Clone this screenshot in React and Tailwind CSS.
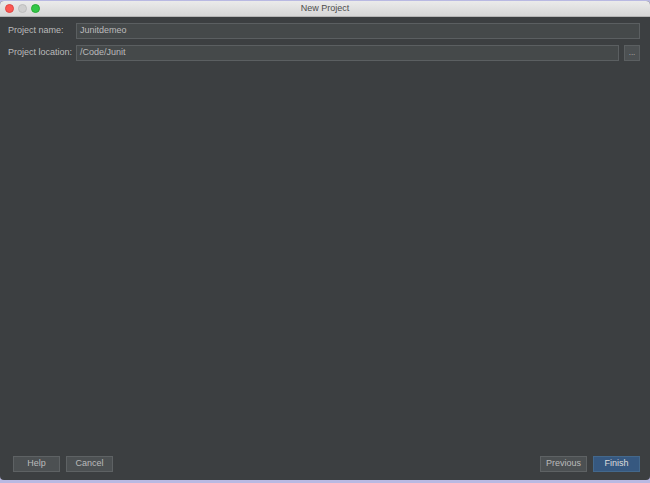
import React from "react";

const Field = ({ label, value, withButton }) => (
  <div className="flex items-center h-[16px]">
    <div className="w-[68px] text-[9px] text-[#bbbbbb]">{label}</div>
    <div className="flex-1 h-full border border-[#5b5f61] bg-[#45494a] flex items-center px-[3px] text-[9px] text-[#bbbbbb]">
      {value}
    </div>
    {withButton && (
      <div className="ml-[5px] w-[16px] h-full border border-[#5b5f61] bg-[#4c5052] flex items-center justify-center text-[8px] leading-none text-[#bbbbbb]">
        ...
      </div>
    )}
  </div>
);

const Button = ({ children, primary }) => (
  <div
    className={
      "h-[16px] w-[47px] flex items-center justify-center text-[9px] border " +
      (primary
        ? "bg-[#365880] border-[#43688c] text-[#dddddd]"
        : "bg-[#4c5052] border-[#5e6264] text-[#bbbbbb]")
    }
  >
    {children}
  </div>
);

export default function App() {
  return (
    <div
      className="w-[650px] h-[483px] bg-[#b9b9e2] pt-[1px] pb-[3px] flex flex-col"
      style={{ fontFamily: '"Liberation Sans", Arial, sans-serif' }}
    >
      <div className="flex-1 flex flex-col rounded-[4px] overflow-hidden bg-[#3c3f41]">
        <div className="h-[16px] bg-gradient-to-b from-[#ebebeb] to-[#d6d6d6] border-b border-[#b5b5b5] flex items-center relative">
          <div className="flex items-center gap-[4px] pl-[5px]">
            <div className="w-[9px] h-[9px] rounded-full bg-[#fc5753] border border-[#df4744]" />
            <div className="w-[9px] h-[9px] rounded-full bg-[#cfcfcf] border border-[#bdbdbd]" />
            <div className="w-[9px] h-[9px] rounded-full bg-[#33c748] border border-[#27aa35]" />
          </div>
          <div className="absolute inset-0 flex items-center justify-center text-[9px] text-[#4d4d4d]">
            New Project
          </div>
        </div>
        <div className="flex-1 flex flex-col pl-[8px] pr-[10px] pt-[6px] pb-[8px]">
          <div className="flex flex-col gap-[6px]">
            <Field label="Project name:" value="Junitdemeo" />
            <Field label="Project location:" value="/Code/Junit" withButton />
          </div>
          <div className="flex-1" />
          <div className="flex items-center justify-between pl-[5px]">
            <div className="flex gap-[6px]">
              <Button>Help</Button>
              <Button>Cancel</Button>
            </div>
            <div className="flex gap-[6px]">
              <Button>Previous</Button>
              <Button primary>Finish</Button>
            </div>
          </div>
        </div>
      </div>
    </div>
  );
}
